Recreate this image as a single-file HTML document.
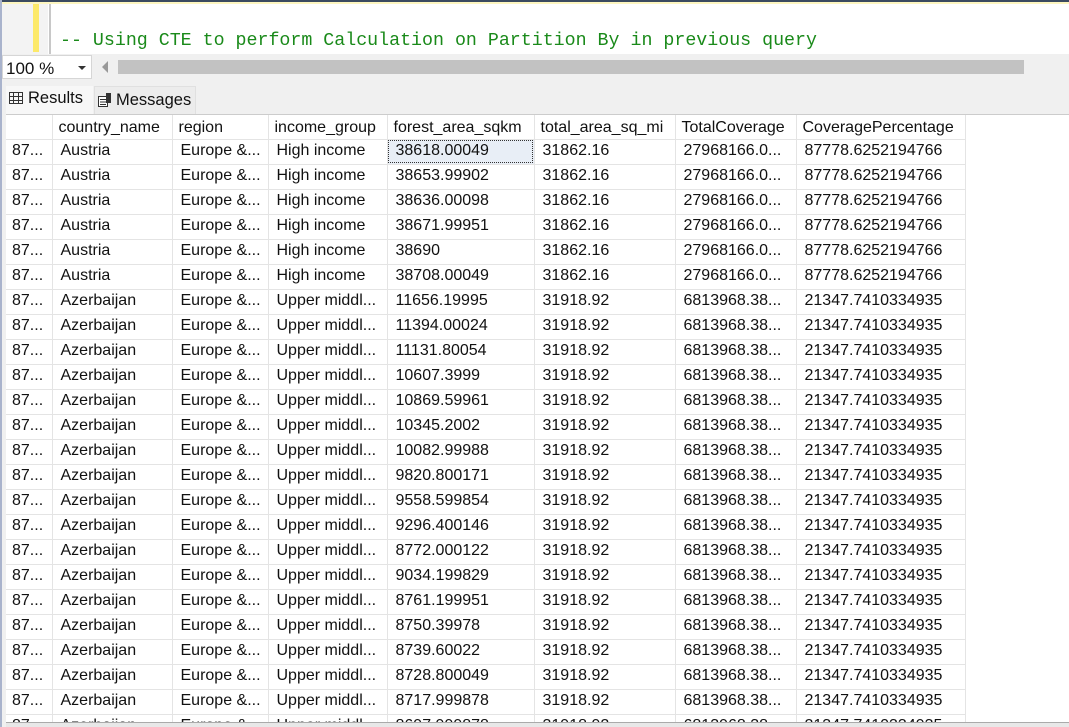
<!DOCTYPE html>
<html><head><meta charset="utf-8"><style>
*{margin:0;padding:0;box-sizing:border-box}
body{width:1069px;height:727px;overflow:hidden;background:#f0f0f0;font-family:"Liberation Sans",Arial,sans-serif;position:relative}
.editor{position:absolute;left:0;top:0;width:1069px;height:54px;background:#fff;border-top:4px solid #fdf6c0}
.topline{position:absolute;left:0;top:0;width:1069px;height:2px;background:#3b4a60}
.gut{position:absolute;left:0;top:4px;width:48px;height:50px;background:#f3f3f3}
.gedge{position:absolute;left:0;top:0;width:2px;height:727px;background:#a9b3cc}
.yel{position:absolute;left:33px;top:4px;width:6px;height:48px;background:#fce96a}
.gl{position:absolute;left:49px;top:4px;width:2px;height:50px;background:#c8c8c8}
.cmt{position:absolute;left:60px;top:31px;font-family:"Liberation Mono",monospace;font-size:18.3px;color:#1a8a1a;white-space:pre}
.zoombar{position:absolute;left:2px;top:54px;width:1067px;height:26px;background:#f0f0f0}
.dd{position:absolute;left:2px;top:55px;width:90px;height:24px;background:#fff;border:1px solid #d6d6d6;font-size:17px;padding:3px 0 0 3px;color:#111}
.dd:after{content:"";position:absolute;right:5px;top:10px;border:4px solid transparent;border-top:4px solid #333}
.arr{position:absolute;left:102px;top:61px;border:6px solid transparent;border-right:6px solid #999;border-left:0}
.thumb{position:absolute;left:118px;top:60px;width:906px;height:14px;background:#c2c2c2}
.tabs{position:absolute;left:2px;top:80px;width:1067px;height:34px;background:#f0f0f0}
.tab{position:absolute;top:86px;height:28px;font-size:16.5px;color:#111;padding-top:3px}
.t1{left:6px;width:87px;background:#f7f7f7}
.t2{left:94px;width:102px;background:#ececec;border:1px solid #e0e0e0;border-bottom:none;padding-top:4px}
.grid{position:absolute;left:6px;top:114px;width:1063px;height:609px;background:#fff;overflow:hidden;border-top:1px solid #ccc}
.bot{position:absolute;left:6px;top:722px;width:1063px;height:5px;background:#e8e8e8;border-top:1px solid #aaa}
table{border-collapse:collapse;font-size:16px;color:#111;table-layout:fixed;margin-top:-1px}
td{height:25px;border-right:1px solid #e4e4e4;border-bottom:1px solid #e4e4e4;white-space:nowrap;overflow:hidden;padding-left:8px;padding-top:0;padding-bottom:2px}
td:first-child{padding-left:6px}
tr.h td{padding-left:6px;padding-top:3px;padding-bottom:0}
.sel{outline:1px dotted #333;outline-offset:-2px;background:#e8eef6}
</style></head><body>
<div class="editor"></div><div class="topline"></div><div class="gut"></div><div class="yel"></div><div class="gl"></div><div class="gedge"></div>
<div class="cmt">-- Using CTE to perform Calculation on Partition By in previous query</div>
<div class="zoombar"></div><div class="dd">100 %</div><div class="arr"></div><div class="thumb"></div>
<div class="tabs"></div>
<div class="tab t1"><svg width="14" height="12" style="margin:0 5px 0 3px;vertical-align:-1px"><rect x="0.5" y="0.5" width="13" height="11" fill="none" stroke="#333"/><path d="M0 4.5H14M0 8.5H14M4.5 0V12M9.5 0V12" stroke="#333"/></svg>Results</div>
<div class="tab t2"><svg width="14" height="14" style="margin:0 4px 0 3px;vertical-align:-2px"><rect x="0.5" y="3.5" width="9" height="10" fill="#fff" stroke="#333"/><path d="M2 6.5H8M2 9H8M2 11.5H8" stroke="#333"/><rect x="8" y="0" width="5" height="10" fill="#333"/></svg>Messages</div>
<div class="grid"><table>
<colgroup><col style="width:46px"><col style="width:120px"><col style="width:96px"><col style="width:119px"><col style="width:147px"><col style="width:141px"><col style="width:121px"><col style="width:169px"></colgroup>
<tr class="h"><td></td><td>country_name</td><td>region</td><td>income_group</td><td>forest_area_sqkm</td><td>total_area_sq_mi</td><td>TotalCoverage</td><td>CoveragePercentage</td></tr>
<tr><td>87...</td><td>Austria</td><td>Europe &amp;...</td><td>High income</td><td class="sel">38618.00049</td><td>31862.16</td><td>27968166.0...</td><td>87778.6252194766</td></tr>
<tr><td>87...</td><td>Austria</td><td>Europe &amp;...</td><td>High income</td><td>38653.99902</td><td>31862.16</td><td>27968166.0...</td><td>87778.6252194766</td></tr>
<tr><td>87...</td><td>Austria</td><td>Europe &amp;...</td><td>High income</td><td>38636.00098</td><td>31862.16</td><td>27968166.0...</td><td>87778.6252194766</td></tr>
<tr><td>87...</td><td>Austria</td><td>Europe &amp;...</td><td>High income</td><td>38671.99951</td><td>31862.16</td><td>27968166.0...</td><td>87778.6252194766</td></tr>
<tr><td>87...</td><td>Austria</td><td>Europe &amp;...</td><td>High income</td><td>38690</td><td>31862.16</td><td>27968166.0...</td><td>87778.6252194766</td></tr>
<tr><td>87...</td><td>Austria</td><td>Europe &amp;...</td><td>High income</td><td>38708.00049</td><td>31862.16</td><td>27968166.0...</td><td>87778.6252194766</td></tr>
<tr><td>87...</td><td>Azerbaijan</td><td>Europe &amp;...</td><td>Upper middl...</td><td>11656.19995</td><td>31918.92</td><td>6813968.38...</td><td>21347.7410334935</td></tr>
<tr><td>87...</td><td>Azerbaijan</td><td>Europe &amp;...</td><td>Upper middl...</td><td>11394.00024</td><td>31918.92</td><td>6813968.38...</td><td>21347.7410334935</td></tr>
<tr><td>87...</td><td>Azerbaijan</td><td>Europe &amp;...</td><td>Upper middl...</td><td>11131.80054</td><td>31918.92</td><td>6813968.38...</td><td>21347.7410334935</td></tr>
<tr><td>87...</td><td>Azerbaijan</td><td>Europe &amp;...</td><td>Upper middl...</td><td>10607.3999</td><td>31918.92</td><td>6813968.38...</td><td>21347.7410334935</td></tr>
<tr><td>87...</td><td>Azerbaijan</td><td>Europe &amp;...</td><td>Upper middl...</td><td>10869.59961</td><td>31918.92</td><td>6813968.38...</td><td>21347.7410334935</td></tr>
<tr><td>87...</td><td>Azerbaijan</td><td>Europe &amp;...</td><td>Upper middl...</td><td>10345.2002</td><td>31918.92</td><td>6813968.38...</td><td>21347.7410334935</td></tr>
<tr><td>87...</td><td>Azerbaijan</td><td>Europe &amp;...</td><td>Upper middl...</td><td>10082.99988</td><td>31918.92</td><td>6813968.38...</td><td>21347.7410334935</td></tr>
<tr><td>87...</td><td>Azerbaijan</td><td>Europe &amp;...</td><td>Upper middl...</td><td>9820.800171</td><td>31918.92</td><td>6813968.38...</td><td>21347.7410334935</td></tr>
<tr><td>87...</td><td>Azerbaijan</td><td>Europe &amp;...</td><td>Upper middl...</td><td>9558.599854</td><td>31918.92</td><td>6813968.38...</td><td>21347.7410334935</td></tr>
<tr><td>87...</td><td>Azerbaijan</td><td>Europe &amp;...</td><td>Upper middl...</td><td>9296.400146</td><td>31918.92</td><td>6813968.38...</td><td>21347.7410334935</td></tr>
<tr><td>87...</td><td>Azerbaijan</td><td>Europe &amp;...</td><td>Upper middl...</td><td>8772.000122</td><td>31918.92</td><td>6813968.38...</td><td>21347.7410334935</td></tr>
<tr><td>87...</td><td>Azerbaijan</td><td>Europe &amp;...</td><td>Upper middl...</td><td>9034.199829</td><td>31918.92</td><td>6813968.38...</td><td>21347.7410334935</td></tr>
<tr><td>87...</td><td>Azerbaijan</td><td>Europe &amp;...</td><td>Upper middl...</td><td>8761.199951</td><td>31918.92</td><td>6813968.38...</td><td>21347.7410334935</td></tr>
<tr><td>87...</td><td>Azerbaijan</td><td>Europe &amp;...</td><td>Upper middl...</td><td>8750.39978</td><td>31918.92</td><td>6813968.38...</td><td>21347.7410334935</td></tr>
<tr><td>87...</td><td>Azerbaijan</td><td>Europe &amp;...</td><td>Upper middl...</td><td>8739.60022</td><td>31918.92</td><td>6813968.38...</td><td>21347.7410334935</td></tr>
<tr><td>87...</td><td>Azerbaijan</td><td>Europe &amp;...</td><td>Upper middl...</td><td>8728.800049</td><td>31918.92</td><td>6813968.38...</td><td>21347.7410334935</td></tr>
<tr><td>87...</td><td>Azerbaijan</td><td>Europe &amp;...</td><td>Upper middl...</td><td>8717.999878</td><td>31918.92</td><td>6813968.38...</td><td>21347.7410334935</td></tr>
<tr><td>87...</td><td>Azerbaijan</td><td>Europe &amp;...</td><td>Upper middl...</td><td>8697.999878</td><td>31918.92</td><td>6813968.38...</td><td>21347.7410334935</td></tr>
</table></div>
<div class="bot"></div>
</body></html>
